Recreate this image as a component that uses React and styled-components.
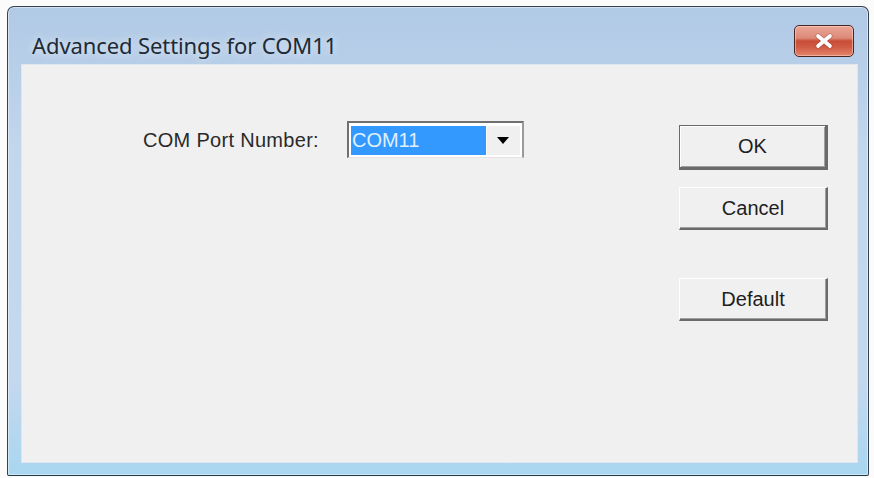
import styled, { createGlobalStyle } from "styled-components";

const Global = createGlobalStyle`
  html, body {
    margin: 0;
    padding: 0;
    background: #fbfbfb;
  }
`;

const App = () => {
    return (
        <>
            <Global />
            <Window>
                <TitleBar>
                    <Title>Advanced Settings for COM11</Title>
                    <CloseButton aria-label="Close">
                        <svg width="22" height="16" viewBox="0 0 22 16">
                            <path d="M5 3 L17 13 M17 3 L5 13" stroke="#7a3a30" strokeWidth="5" strokeLinecap="round" opacity="0.35" />
                            <path d="M5 3 L17 13 M17 3 L5 13" stroke="#ffffff" strokeWidth="3.6" strokeLinecap="round" />
                        </svg>
                    </CloseButton>
                </TitleBar>
                <Client>
                    <FormRow>
                        <Label>COM Port Number:</Label>
                        <Combo>
                            <Selected>COM11</Selected>
                            <DropButton>
                                <svg width="12" height="8" viewBox="0 0 12 8">
                                    <path d="M0 0 H12 L6 7 Z" fill="#000" />
                                </svg>
                            </DropButton>
                        </Combo>
                    </FormRow>
                    <ButtonColumn>
                        <Button $default>OK</Button>
                        <Button>Cancel</Button>
                        <Button $gap>Default</Button>
                    </ButtonColumn>
                </Client>
            </Window>
        </>
    );
};

const Window = styled.div`
    margin: 6px 0 0 7px;
    width: 862px;
    height: 470px;
    box-sizing: border-box;
    border: 1px solid #34414f;
    border-bottom-color: #1f3a44;
    border-radius: 7px 7px 2px 2px;
    background: linear-gradient(to bottom, #b0c9e5 0%, #c2d6ec 30%, #c4d8ee 80%, #a9d6f0 100%);
    padding: 0 10px 12px 13px;
    display: flex;
    flex-direction: column;
    box-shadow: inset 0 0 0 1px rgba(255,255,255,0.45);
`;

const TitleBar = styled.div`
    height: 57px;
    display: flex;
    align-items: flex-start;
    justify-content: space-between;
`;

const Title = styled.div`
    font-family: "Noto Sans", "Open Sans", sans-serif;
    font-size: 22px;
    color: #1e2a36;
    padding: 23px 0 0 11px;
    letter-spacing: -0.1px;
    text-shadow: 0 0 8px rgba(255,255,255,0.8);
`;

const CloseButton = styled.div`
    margin: 18px 4px 0 0;
    width: 60px;
    height: 32px;
    box-sizing: border-box;
    border: 1px solid #4a2622;
    border-radius: 5px;
    background: linear-gradient(to bottom, #e9a697 0%, #dd8a78 40%, #c94d35 50%, #cf5c45 70%, #e5846b 100%);
    display: flex;
    align-items: center;
    justify-content: center;
    box-shadow: inset 0 0 0 1px rgba(255,220,210,0.5);
`;

const Client = styled.div`
    flex: 1;
    background: #f0f0f0;
    border: 1px solid #dfe6ee;
    display: flex;
    justify-content: space-between;
    align-items: flex-start;
    padding: 56px 29px 0 0;
`;

const FormRow = styled.div`
    display: flex;
    align-items: center;
    gap: 28px;
    padding-left: 121px;
`;

const Label = styled.div`
    font-family: "Liberation Sans", Arial, sans-serif;
    font-size: 20px;
    color: #2a2a2a;
    letter-spacing: 0.3px;
    padding-top: 2px;
`;

const Combo = styled.div`
    width: 177px;
    height: 37px;
    box-sizing: border-box;
    background: #ffffff;
    border-top: 2px solid #707070;
    border-left: 2px solid #707070;
    border-right: 2px solid #9a9a9a;
    border-bottom: 1px solid #e4e4e4;
    display: flex;
    align-items: stretch;
    padding: 3px 2px 2px 2px;
`;

const Selected = styled.div`
    flex: 1;
    background: #3399ff;
    color: #dff0ff;
    font-family: "Liberation Sans", Arial, sans-serif;
    font-size: 20px;
    display: flex;
    align-items: center;
    padding-left: 1px;
`;

const DropButton = styled.div`
    width: 33px;
    background: #f0f0f0;
    display: flex;
    align-items: center;
    justify-content: center;
    border-left: 1px solid #ffffff;
`;

const ButtonColumn = styled.div`
    display: flex;
    flex-direction: column;
    gap: 17px;
    padding-top: 4px;
`;

const Button = styled.div`
    width: 149px;
    height: ${p => (p.$default ? 45 : 43)}px;
    box-sizing: border-box;
    background: #f0f0f0;
    font-family: "Liberation Sans", Arial, sans-serif;
    font-size: 20px;
    color: #1e1e1e;
    display: flex;
    align-items: center;
    justify-content: center;
    margin-top: ${p => (p.$gap ? 31 : 0)}px;
    border-top: 1px solid ${p => (p.$default ? "#6a6a6a" : "#ffffff")};
    border-left: 1px solid ${p => (p.$default ? "#6a6a6a" : "#ffffff")};
    border-right: ${p => (p.$default ? 3 : 2)}px solid #6a6a6a;
    border-bottom: ${p => (p.$default ? 3 : 2)}px solid #6a6a6a;
    box-shadow: ${p => (p.$default ? "inset 1px 1px 0 #ffffff, inset -1px -1px 0 #a0a0a0" : "inset -1px -1px 0 #a0a0a0")};
`;

export default App;
